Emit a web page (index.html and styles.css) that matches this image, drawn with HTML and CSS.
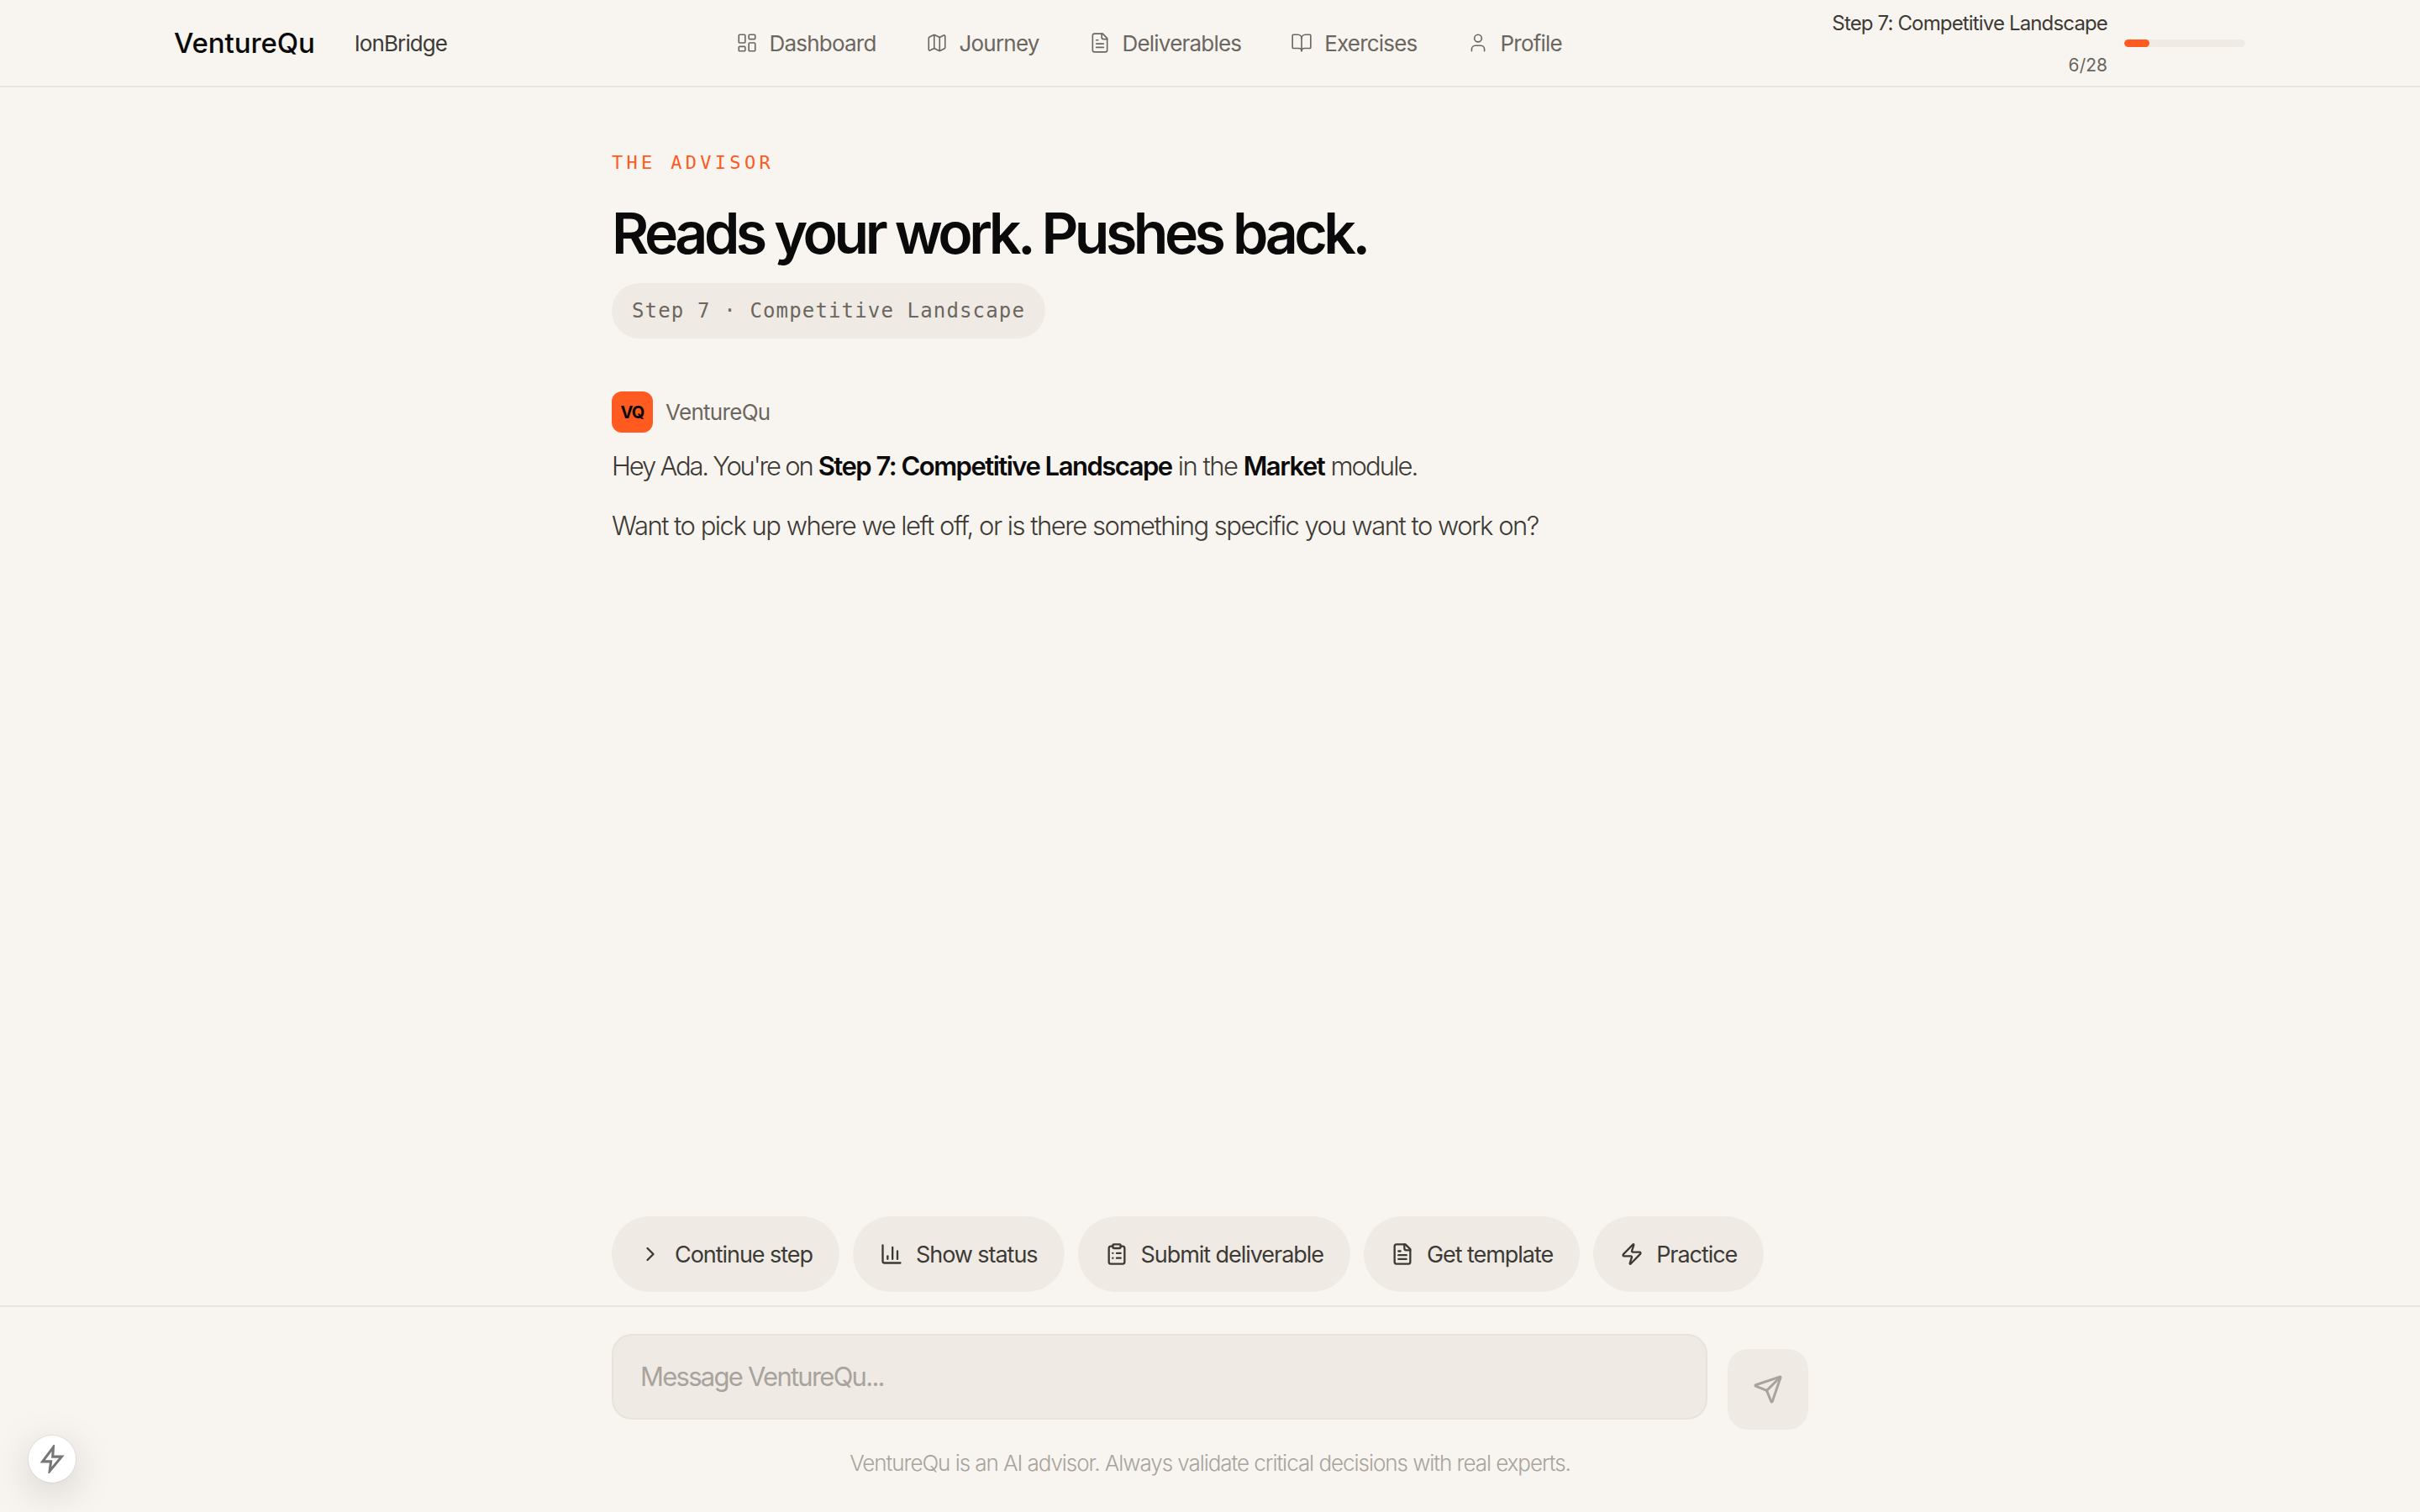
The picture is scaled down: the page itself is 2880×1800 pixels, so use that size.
FILE: index.html
```html
<!DOCTYPE html>
<html lang="en">
<head>
<meta charset="utf-8">
<title>VentureQu</title>
<link rel="stylesheet" href="styles.css">
</head>
<body>
<div class="page">
  <header class="header">
    <div class="brand">
      <span class="logo">VentureQu</span>
      <span class="company">IonBridge</span>
    </div>
    <nav class="nav">
      <a class="nav-item"><svg class="nav-icon" viewBox="0 0 24 24"><rect x="3" y="3" width="7" height="9" rx="1"/><rect x="14" y="3" width="7" height="5" rx="1"/><rect x="14" y="12" width="7" height="9" rx="1"/><rect x="3" y="16" width="7" height="5" rx="1"/></svg>Dashboard</a>
      <a class="nav-item"><svg class="nav-icon" viewBox="0 0 24 24"><path d="M14.106 5.553a2 2 0 0 0 1.788 0l3.659-1.83A1 1 0 0 1 21 4.619v12.764a1 1 0 0 1-.553.894l-4.553 2.277a2 2 0 0 1-1.788 0l-4.212-2.106a2 2 0 0 0-1.788 0l-3.659 1.83A1 1 0 0 1 3 19.381V6.618a1 1 0 0 1 .553-.894l4.553-2.277a2 2 0 0 1 1.788 0z"/><path d="M15 5.764v15"/><path d="M9 3.236v15"/></svg>Journey</a>
      <a class="nav-item"><svg class="nav-icon" viewBox="0 0 24 24"><path d="M15 2H6a2 2 0 0 0-2 2v16a2 2 0 0 0 2 2h12a2 2 0 0 0 2-2V7Z"/><path d="M14 2v4a2 2 0 0 0 2 2h4"/><path d="M10 9H8"/><path d="M16 13H8"/><path d="M16 17H8"/></svg>Deliverables</a>
      <a class="nav-item"><svg class="nav-icon" viewBox="0 0 24 24"><path d="M12 7v14"/><path d="M3 18a1 1 0 0 1-1-1V4a1 1 0 0 1 1-1h5a4 4 0 0 1 4 4 4 4 0 0 1 4-4h5a1 1 0 0 1 1 1v13a1 1 0 0 1-1 1h-6a3 3 0 0 0-3 3 3 3 0 0 0-3-3z"/></svg>Exercises</a>
      <a class="nav-item"><svg class="nav-icon" viewBox="0 0 24 24"><path d="M19 21v-2a4 4 0 0 0-4-4H9a4 4 0 0 0-4 4v2"/><circle cx="12" cy="7" r="4"/></svg>Profile</a>
    </nav>
    <div class="progress">
      <div class="progress-text">
        <span class="progress-step">Step 7: Competitive Landscape</span>
        <span class="progress-count">6/28</span>
      </div>
      <div class="progress-track"><div class="progress-fill"></div></div>
    </div>
  </header>

  <main class="main">
    <div class="column">
      <div class="eyebrow">THE ADVISOR</div>
      <h1 class="title">Reads your work. Pushes back.</h1>
      <div class="step-pill">Step 7 · Competitive Landscape</div>
      <div class="sender">
        <span class="avatar">VQ</span>
        <span class="sender-name">VentureQu</span>
      </div>
      <p class="message"><span class="tight">Hey Ada. You're on</span> <strong>Step 7: Competitive Landscape</strong> in the <strong>Market</strong> <span class="tight-end">module.</span></p>
      <p class="message">Want to pick up where we left off, or is there something specific you want to work on?</p>
    </div>
  </main>

  <div class="chips">
    <button class="chip"><svg class="chip-icon" viewBox="0 0 24 24"><path d="m9 18 6-6-6-6"/></svg>Continue step</button>
    <button class="chip"><svg class="chip-icon" viewBox="0 0 24 24"><path d="M3 3v16a2 2 0 0 0 2 2h16"/><path d="M18 17V9"/><path d="M13 17V5"/><path d="M8 17v-3"/></svg>Show status</button>
    <button class="chip"><svg class="chip-icon" viewBox="0 0 24 24"><rect x="8" y="2" width="8" height="4" rx="1"/><path d="M16 4h2a2 2 0 0 1 2 2v14a2 2 0 0 1-2 2H6a2 2 0 0 1-2-2V6a2 2 0 0 1 2-2h2"/><path d="M12 11h4"/><path d="M12 16h4"/><path d="M8 11h.01"/><path d="M8 16h.01"/></svg>Submit deliverable</button>
    <button class="chip"><svg class="chip-icon" viewBox="0 0 24 24"><path d="M15 2H6a2 2 0 0 0-2 2v16a2 2 0 0 0 2 2h12a2 2 0 0 0 2-2V7Z"/><path d="M14 2v4a2 2 0 0 0 2 2h4"/><path d="M10 9H8"/><path d="M16 13H8"/><path d="M16 17H8"/></svg>Get template</button>
    <button class="chip"><svg class="chip-icon" viewBox="0 0 24 24"><path d="M4 14a1 1 0 0 1-.78-1.63l9.9-10.2a.5.5 0 0 1 .86.46l-1.92 6.02A1 1 0 0 0 13 10h7a1 1 0 0 1 .78 1.63l-9.9 10.2a.5.5 0 0 1-.86-.46l1.92-6.02A1 1 0 0 0 11 14z"/></svg>Practice</button>
  </div>

  <footer class="composer">
    <div class="composer-row">
      <div class="input">Message VentureQu...</div>
      <button class="send"><svg class="send-icon" viewBox="0 0 24 24"><path d="M14.536 21.686a.5.5 0 0 0 .937-.024l6.5-19a.496.496 0 0 0-.635-.635l-19 6.5a.5.5 0 0 0-.024.937l7.93 3.18a2 2 0 0 1 1.112 1.11z"/><path d="m21.854 2.147-10.94 10.939"/></svg></button>
    </div>
    <div class="disclaimer">VentureQu is an AI advisor. Always validate critical decisions with real experts.</div>
  </footer>

  <button class="dev-badge"><svg class="dev-icon" viewBox="0 0 24 24"><path d="M13 2 4 14h7l-1 8 10-12h-7.5z"/></svg></button>
</div>
</body>
</html>
```
FILE: styles.css
```css
* { box-sizing: border-box; }
html, body { margin: 0; height: 100%; }
body {
  background: #f8f5f0;
  color: #3d3a36;
  font-family: Inter, "Noto Sans", sans-serif;
}
svg { fill: none; stroke: currentColor; stroke-linecap: round; stroke-linejoin: round; }
button { font: inherit; border: 0; }

.page { height: 1800px; display: flex; flex-direction: column; position: relative; overflow: hidden; }

.header {
  height: 104px;
  flex: none;
  border-bottom: 2px solid #e8e4dc;
  padding: 0 208px 0 207px;
  display: flex;
  align-items: center;
  justify-content: space-between;
}
.brand { display: flex; align-items: center; gap: 47px; }
.logo { font-size: 33px; font-weight: 500; letter-spacing: -0.1px; color: #0a0a0a; }
.company { font-size: 26px; letter-spacing: -0.9px; color: #3d3a36; }

.nav { display: flex; gap: 59px; padding-left: 22px; }
.nav-item { display: flex; align-items: center; gap: 14px; font-size: 26px; letter-spacing: -0.8px; color: #6b665f; }
.nav-icon { width: 26px; height: 26px; stroke-width: 1.5; }

.progress { display: flex; align-items: center; gap: 20px; }
.progress-text { display: flex; flex-direction: column; align-items: flex-end; gap: 20px; }
.progress-step { font-size: 24px; line-height: 34px; letter-spacing: -0.85px; color: #3d3a36; }
.progress-count { font-size: 21px; line-height: 26px; color: #6b665f; }
.progress-track { width: 144px; height: 9px; border-radius: 5px; background: #efebe4; overflow: hidden; margin-top: 1px; }
.progress-fill { width: 21%; height: 100%; border-radius: 5px; background: #ff5a1f; }

.main { flex: 1; display: flex; justify-content: center; }
.column { width: 1424px; padding-top: 77px; }
.eyebrow {
  font-family: "DejaVu Sans Mono", monospace;
  font-size: 22px;
  line-height: 26px;
  letter-spacing: 4.3px;
  color: #ff5a1f;
}
.title {
  margin: 28px 0 0;
  font-size: 68px;
  line-height: 84px;
  font-weight: 600;
  letter-spacing: -4.5px;
  color: #0a0a0a;
}
.step-pill {
  margin-top: 18px;
  display: inline-block;
  height: 66px;
  padding: 0 24px;
  border-radius: 33px;
  background: #efebe4;
  font-family: "DejaVu Sans Mono", monospace;
  font-size: 24px;
  line-height: 66px;
  letter-spacing: 1.15px;
  color: #6b665f;
}
.sender { margin-top: 63px; display: flex; align-items: center; gap: 15px; }
.avatar {
  width: 49px;
  height: 49px;
  border-radius: 12px;
  background: #ff5a1f;
  color: #0a0a0a;
  font-size: 20px;
  font-weight: 700;
  letter-spacing: -0.8px;
  display: flex;
  align-items: center;
  justify-content: center;
}
.sender-name { font-size: 26px; letter-spacing: -0.7px; color: #6b665f; }
.message {
  margin: 0;
  font-size: 31px;
  line-height: 50px;
  font-weight: 300;
  letter-spacing: -1.5px;
  color: #3d3a36;
}
.tight { letter-spacing: -2.2px; }
.tight-end { letter-spacing: -1.9px; }
.sender + .message { margin-top: 15px; }
.message + .message { margin-top: 21px; }
.message strong { font-weight: 600; color: #0a0a0a; letter-spacing: -1.5px; }

.chips {
  flex: none;
  width: 1424px;
  margin: 0 auto 16px;
  display: flex;
  gap: 16px;
}
.chip {
  height: 90px;
  padding: 0 32px;
  border-radius: 45px;
  background: #efebe4;
  color: #3d3a36;
  display: flex;
  align-items: center;
  gap: 15px;
  font-size: 27px;
  letter-spacing: -1.05px;
  font-family: Inter, sans-serif;
}
.chip-icon { width: 28px; height: 28px; stroke-width: 2; }

.composer { flex: none; height: 246px; border-top: 2px solid #e8e4dc; padding-top: 32px; }
.composer-row { width: 1424px; margin: 0 auto; display: flex; gap: 24px; align-items: flex-end; height: 114px; }
.input {
  flex: 1;
  height: 102px;
  align-self: flex-start;
  border: 2px solid #e8e4dc;
  border-radius: 24px;
  background: #efebe4;
  padding: 0 32px;
  font-size: 31px;
  line-height: 98px;
  letter-spacing: -1.75px;
  font-weight: 400;
  color: #a8a39c;
}
.send {
  width: 96px;
  height: 96px;
  border-radius: 24px;
  background: #efebe4;
  color: #a8a39c;
  display: flex;
  align-items: center;
  justify-content: center;
}
.send-icon { width: 36px; height: 36px; stroke-width: 2; }
.disclaimer {
  margin-top: 23px;
  text-align: center;
  font-size: 26px;
  line-height: 34px;
  letter-spacing: -1.05px;
  font-weight: 300;
  color: #a8a39c;
}

.dev-badge {
  position: absolute;
  left: 34px;
  bottom: 35px;
  width: 56px;
  height: 56px;
  border-radius: 50%;
  background: #fff;
  color: #777;
  box-shadow: 0 0 0 1px rgba(0,0,0,.05), 0 12px 48px rgba(0,0,0,.16);
  display: flex;
  align-items: center;
  justify-content: center;
  padding: 0;
}
.dev-icon { width: 34px; height: 34px; stroke-width: 2.2; stroke-linecap: butt; stroke-linejoin: miter; }
```
